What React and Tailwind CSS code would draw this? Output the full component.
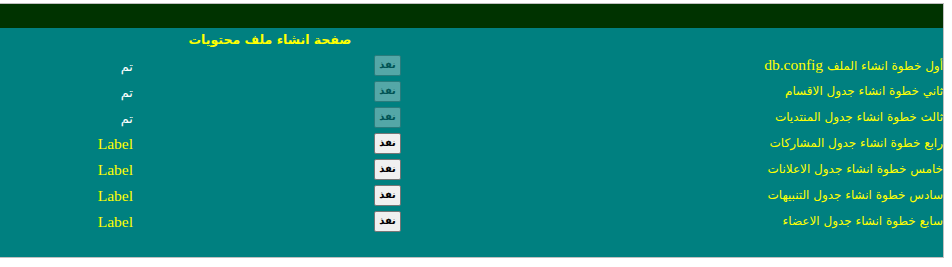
import React from 'react';

const steps = [
  { text: 'أول خطوة انشاء الملف', latin: 'db.config', done: true },
  { text: 'ثاني خطوة انشاء جدول الاقسام', done: true },
  { text: 'ثالث خطوة انشاء جدول المنتديات', done: true },
  { text: 'رابع خطوة انشاء جدول المشاركات', done: false },
  { text: 'خامس خطوة انشاء جدول الاعلانات', done: false },
  { text: 'سادس خطوة انشاء جدول التنبيهات', done: false },
  { text: 'سابع خطوة انشاء جدول الاعضاء', done: false },
];

function StepRow({ text, latin, done }) {
  return (
    <div className="flex h-[26px] items-center">
      <div className="w-[355px] pr-[222px] text-right">
        {done ? (
          <span dir="rtl" className="text-white text-[13px] font-['DejaVu_Sans',sans-serif]">
            تم
          </span>
        ) : (
          <span className="text-[#ffff00] text-[15.5px] font-['Liberation_Serif',serif]">Label</span>
        )}
      </div>
      <div className="w-[65px] flex justify-center">
        <button
          disabled={done}
          className={
            'w-[27px] h-[21px] bg-[#f0f0f0] border border-[#767676] rounded-[2px] text-black text-[10px] font-bold leading-none font-["DejaVu_Sans",sans-serif] ' +
            (done ? 'opacity-35' : '')
          }
        >
          نفذ
        </button>
      </div>
      <div
        dir="rtl"
        className="flex-1 text-right text-[#ffff00] text-[12px] whitespace-nowrap font-['DejaVu_Sans',sans-serif]"
      >
        {text}
        {latin && (
          <>
            {' '}
            <span className="text-[15.5px] font-['Liberation_Serif',serif]">{latin}</span>
          </>
        )}
      </div>
    </div>
  );
}

export default function App() {
  return (
    <div className="w-[952px] h-[267px] bg-white pt-[3px]">
      <div className="w-[944px] border-t border-r border-b border-[#c0c0c0]">
        <div className="h-[24px] bg-[#003300]" />
        <div className="bg-[#008080] h-[229px]">
          <div className="flex h-[24px] items-center">
            <div
              dir="rtl"
              className="w-[540px] text-center text-[#ffff00] text-[12.5px] font-bold font-['DejaVu_Sans',sans-serif]"
            >
              صفحة انشاء ملف محتويات
            </div>
          </div>
          {steps.map((s, i) => (
            <StepRow key={i} text={s.text} latin={s.latin} done={s.done} />
          ))}
        </div>
      </div>
    </div>
  );
}
